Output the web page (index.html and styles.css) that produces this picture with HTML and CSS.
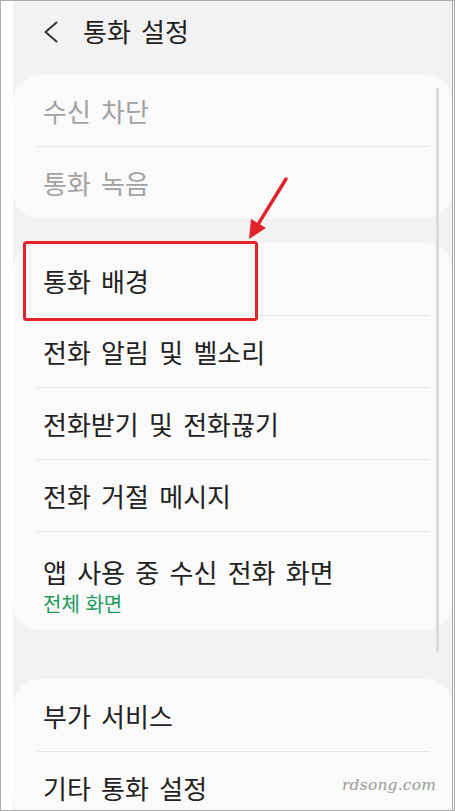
FILE: index.html
```html
<!DOCTYPE html>
<html lang="ko">
<head>
<meta charset="utf-8">
<link rel="stylesheet" href="styles.css">
</head>
<body>
<div class="frame">
  <div class="screen">
    <header class="header">
      <svg class="back" width="14" height="22" viewBox="0 0 14 22"><polyline points="12.5,1.5 1.5,11 12.5,20.5" fill="none" stroke="#333" stroke-width="2" stroke-linecap="round" stroke-linejoin="round"/></svg>
      <h1 class="title">통화 설정</h1>
    </header>

    <section class="card">
      <div class="row muted">수신 차단</div>
      <div class="divider"></div>
      <div class="row muted">통화 녹음</div>
    </section>

    <section class="card card-2">
      <div class="row">통화 배경</div>
      <div class="divider"></div>
      <div class="row">전화 알림 및 벨소리</div>
      <div class="divider"></div>
      <div class="row">전화받기 및 전화끊기</div>
      <div class="divider"></div>
      <div class="row">전화 거절 메시지</div>
      <div class="divider"></div>
      <div class="row row-tall">
        <div>앱 사용 중 수신 전화 화면</div>
        <div class="sub">전체 화면</div>
      </div>
    </section>

    <section class="card card-3">
      <div class="row">부가 서비스</div>
      <div class="divider"></div>
      <div class="row">기타 통화 설정</div>
    </section>

    <div class="scrollbar"></div>
    <div class="watermark">rdsong.com</div>
  </div>

  <svg class="annot" width="455" height="811" viewBox="0 0 455 811">
    <rect x="24.5" y="242.5" width="232" height="77" rx="2" fill="none" stroke="#e3232c" stroke-width="3"/>
    <line x1="286" y1="179" x2="258.5" y2="223.7" stroke="#e3232c" stroke-width="3.5" stroke-linecap="round"/>
    <polygon points="249,239 266,228 251,219" fill="#e3232c"/>
  </svg>
</div>
</body>
</html>
```

FILE: styles.css
```css
* { box-sizing: border-box; }
html, body { margin: 0; padding: 0; background: #fff; }
body {
  font-family: "Noto Sans CJK KR", "Noto Sans", sans-serif;
  color: #222;
}
.frame {
  position: relative;
  width: 455px;
  height: 811px;
  border-top: 1px solid #aaa;
  border-left: 1px solid #aaa;
  border-bottom: 1px solid #aaa;
  border-right: 3px double #aaa;
  padding-left: 12px;
  background: #fff;
  overflow: hidden;
}
.screen {
  position: relative;
  height: 100%;
  background: #f2f2f2;
  display: flex;
  flex-direction: column;
  overflow: hidden;
}
.header {
  height: 74px;
  flex: none;
  display: flex;
  align-items: center;
  padding-left: 31px;
  padding-bottom: 14px;
}
.back { display: block; margin-top: 2px; }
.title {
  margin: 0 0 0 25px;
  font-size: 26px;
  font-weight: 400;
  color: #1e1e1e;
  word-spacing: 3px;
  line-height: 1;
}
.card {
  flex: none;
  background: #fafafa;
  border-radius: 26px;
  padding: 0 23px 0 24px;
}
.card-2 { margin-top: 25px; }
.card-3 { margin-top: 49px; }
.row {
  height: 71px;
  display: flex;
  align-items: center;
  padding-left: 6px;
  font-size: 26px;
  word-spacing: 3px;
  line-height: 1;
  padding-top: 1px;
}
.card-2 .row:first-child { height: 72px; padding-top: 3px; }
.card-3 .row:first-child { height: 72px; padding-top: 2px; }
.muted { color: #a2a2a2; }
.divider { height: 1px; background: #e6e6e6; }
.row-tall {
  height: 98px;
  flex-direction: column;
  align-items: flex-start;
  justify-content: flex-start;
  padding-top: 27px;
}
.sub {
  margin-top: 9px;
  font-size: 20px;
  color: #1d9a5c;
  word-spacing: 0;
}
.scrollbar {
  position: absolute;
  left: 423px;
  top: 87px;
  width: 3px;
  height: 565px;
  border-radius: 2px;
  background: #dadada;
}
.watermark {
  position: absolute;
  left: 329px;
  top: 775px;
  font-family: "DejaVu Serif", serif;
  font-style: italic;
  font-size: 15.5px;
  letter-spacing: 0.2px;
  color: #9a9a9a;
}
.annot {
  position: absolute;
  left: -1px;
  top: -1px;
  pointer-events: none;
}
```
